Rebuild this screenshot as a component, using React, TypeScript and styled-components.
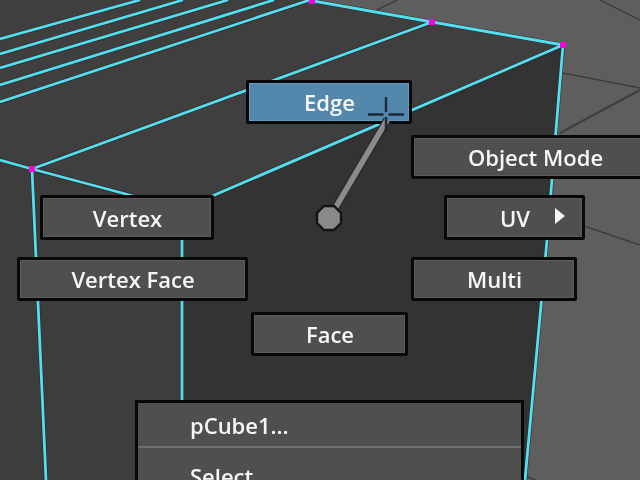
import styled, { createGlobalStyle } from "styled-components";

const GlobalStyle = createGlobalStyle`
  html,
  body {
    margin: 0;
    padding: 0;
    background: #3d3d3d;
  }
`;

const Viewport = styled.div`
  position: relative;
  width: 640px;
  height: 480px;
  overflow: hidden;
  background: #5e5e5e;
  font-family: "Open Sans", "Noto Sans", sans-serif;
  filter: blur(0.5px);
`;

const Scene = styled.svg`
  position: absolute;
  inset: 0;
  display: block;
`;

const MarkingMenu = styled.div`
  position: absolute;
  inset: 0;
  display: flex;
  flex-direction: column;
  padding-top: 80px;
`;

const Row = styled.div<{ $left: number; $gap?: number; $below: number; $tall?: boolean }>`
  flex: none;
  display: flex;
  height: ${(p) => (p.$tall ? 45 : 44)}px;
  padding-left: ${(p) => p.$left}px;
  gap: ${(p) => p.$gap ?? 0}px;
  margin-bottom: ${(p) => p.$below}px;
`;

const Item = styled.div<{ $w: number; $active?: boolean }>`
  position: relative;
  flex: none;
  width: ${(p) => p.$w}px;
  box-sizing: border-box;
  display: flex;
  align-items: center;
  justify-content: center;
  border: 3px solid #080808;
  border-radius: 2px;
  background: ${(p) => (p.$active ? "#5387ab" : "#4f4f4f")};
  box-shadow: inset 0 0 0 1px ${(p) => (p.$active ? "#659ac0" : "#5c5c5c")};
  color: #f6f6f6;
  font-size: 22px;
  font-weight: 600;
  padding-left: 1px;
`;

const Arrow = styled.span`
  position: absolute;
  right: 17px;
  top: 10px;
  width: 0;
  height: 0;
  border-left: 10px solid #f6f6f6;
  border-top: 8px solid transparent;
  border-bottom: 8px solid transparent;
`;

const Menu = styled.div`
  flex: none;
  margin-left: 135px;
  width: 389px;
  height: 120px;
  box-sizing: border-box;
  border: 3px solid #080808;
  background: #4f4f4f;
  color: #f6f6f6;
  font-size: 22px;
  font-weight: 600;
`;

const MenuRow = styled.div<{ $divided?: boolean }>`
  height: ${(p) => (p.$divided ? 45 : 56)}px;
  display: flex;
  align-items: center;
  padding-left: 52px;
  box-sizing: border-box;
  border-bottom: ${(p) => (p.$divided ? "2px solid #6e6e6e" : "none")};
`;

const wire = "#4fe0f2";

const edges = [
  "0,39 140,0",
  "0,54 183,0",
  "0,68 228,0",
  "0,85 274,0",
  "0,102 310,0",
  "32,169 432,22",
  "182,209 563,45",
  "0,160 32,169",
  "32,169 182,209",
  "32,169 46,480",
  "182,209 182,402",
  "563,45 547,240 525,480",
  "308,0 432,22 563,45",
];

function ViewportScene() {
  return (
    <Scene width="640" height="480" viewBox="0 0 640 480">
      <g stroke="#3e3e3e" strokeWidth="1.5" fill="none">
        <path d="M377 10 L397 0" />
        <path d="M563 73 L640 88" />
        <path d="M560 133 L640 90" strokeWidth="2" />
        <path d="M584 226 L640 245" />
        <path d="M600 0 L640 20" />
        <path d="M525 476 L560 490" />
      </g>
      <polygon points="0,0 312,0 563,45 182,209 32,169 0,160" fill="#3f3f3f" />
      <polygon points="0,160 32,169 182,209 182,480 0,480" fill="#3d3d3d" />
      <polygon points="182,209 563,45 525,480 182,480" fill="#333333" />
      <g stroke="#3a1a1a" strokeWidth="4" fill="none" opacity="0.8">
        {edges.map((points) => (
          <polyline key={points} points={points} />
        ))}
      </g>
      <g stroke={wire} strokeWidth="2.8" fill="none">
        {edges.map((points) => (
          <polyline key={points} points={points} />
        ))}
      </g>
      <g fill="#ff00d8">
        <rect x="309" y="0" width="6" height="4" />
        <rect x="429" y="19" width="6" height="6" />
        <rect x="560" y="42" width="6" height="6" />
        <rect x="29" y="166" width="6" height="6" />
      </g>
    </Scene>
  );
}

function Pointer() {
  return (
    <Scene width="640" height="480" viewBox="0 0 640 480">
      <line x1="330" y1="217" x2="387" y2="120" stroke="#2a2a2a" strokeWidth="8" />
      <line x1="330" y1="217" x2="387" y2="120" stroke="#8b8b8b" strokeWidth="5.5" />
      <polygon
        points="324,206 334,206 341,213 341,223 334,230 324,230 317,223 317,213"
        fill="#898989"
        stroke="#141414"
        strokeWidth="2.4"
      />
      <g stroke="#1b2a35" strokeWidth="2.4" fill="none">
        <path d="M368 114.5 L383.5 114.5 M388.5 114.5 L404 114.5" />
        <path d="M386 97 L386 112 M386 117 L386 132" />
      </g>
    </Scene>
  );
}

export default function App() {
  return (
    <Viewport>
      <GlobalStyle />
      <ViewportScene />
      <MarkingMenu>
        <Row $left={246} $below={11}>
          <Item $w={166} $active>
            Edge
          </Item>
        </Row>
        <Row $left={411} $below={16}>
          <Item $w={248}>Object Mode</Item>
        </Row>
        <Row $left={40} $gap={230} $below={17} $tall>
          <Item $w={174}>Vertex</Item>
          <Item $w={141}>
            UV
            <Arrow />
          </Item>
        </Row>
        <Row $left={17} $gap={163} $below={11}>
          <Item $w={231}>Vertex Face</Item>
          <Item $w={166}>Multi</Item>
        </Row>
        <Row $left={251} $below={44}>
          <Item $w={157}>Face</Item>
        </Row>
        <Menu>
          <MenuRow $divided>pCube1...</MenuRow>
          <MenuRow>Select</MenuRow>
        </Menu>
      </MarkingMenu>
      <Pointer />
    </Viewport>
  );
}
